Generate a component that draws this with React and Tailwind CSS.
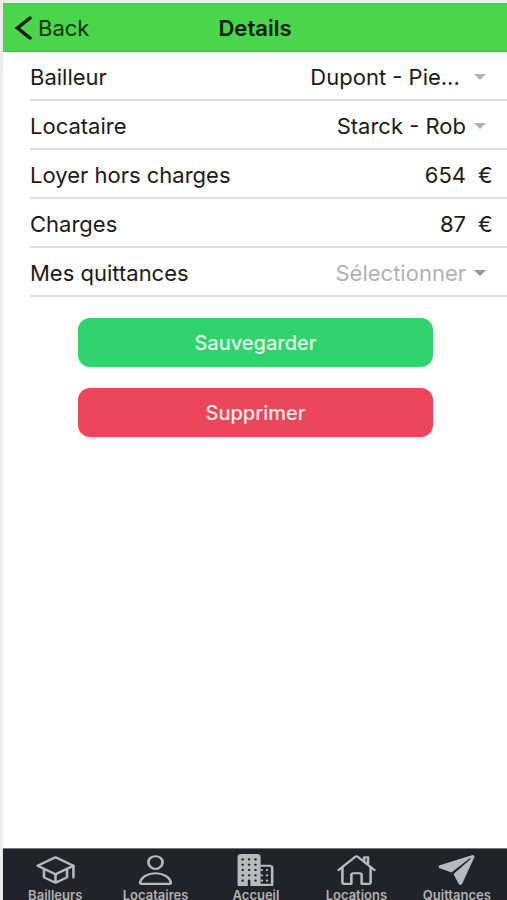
import { IoSchoolOutline, IoPersonOutline, IoBusiness, IoHomeOutline, IoPaperPlane } from 'react-icons/io5';

const tabs = [
  { label: 'Bailleurs', Icon: IoSchoolOutline },
  { label: 'Locataires', Icon: IoPersonOutline },
  { label: 'Accueil', Icon: IoBusiness },
  { label: 'Locations', Icon: IoHomeOutline },
  { label: 'Quittances', Icon: IoPaperPlane },
];

function Row({ id, label, children }) {
  return (
    <div className="flex h-[49px] items-center border-b-2 border-[#dedede] pt-0.5">
      <label htmlFor={id} className="flex-1 whitespace-nowrap">{label}</label>
      {children}
    </div>
  );
}

function SelectRow({ id, label, value, muted }) {
  return (
    <Row id={id} label={label}>
      <div className="relative">
        <select
          id={id}
          defaultValue={value}
          className={`w-56 appearance-none bg-transparent pr-[41px] text-right outline-none [text-align-last:right] ${muted ? 'text-[#b2b2b2]' : 'text-[#1a1a1a]'}`}
        >
          <option value={value}>{value}</option>
        </select>
        <svg viewBox="0 0 12 7" className={`pointer-events-none absolute top-1/2 right-[21px] h-[6px] w-3 -translate-y-1/2 ${muted ? 'text-[#979797]' : 'text-[#b0b0b0]'}`} preserveAspectRatio="none" aria-hidden="true">
          <path d="M0 0h12L6 7z" fill="currentColor" />
        </svg>
      </div>
    </Row>
  );
}

function AmountRow({ id, label, value }) {
  return (
    <Row id={id} label={label}>
      <input id={id} defaultValue={value} inputMode="numeric" className="w-24 bg-transparent text-right outline-none" />
      <span className="w-[41px] pl-3">€</span>
    </Row>
  );
}

export default function App() {
  return (
    <div className="flex h-screen flex-col overflow-hidden border-t-[3px] border-l-[3px] border-[#ededed] bg-white font-['Inter','Liberation_Sans',sans-serif] text-[22px] leading-7 text-[#1a1a1a]">
      <header className="grid h-[49px] shrink-0 grid-cols-3 items-center border-b border-[#43b843] bg-[#4bd54a] pt-0.5">
        <button type="button" className="flex items-center gap-1.5 pl-3 text-[#0b360c]">
          <svg viewBox="0 0 17 24" className="h-6 w-[17px] text-[#071c07]" fill="none" stroke="currentColor" strokeWidth="3.4" strokeLinecap="round" aria-hidden="true">
            <path d="M15 2 2.500 12 15 22" />
          </svg>
          Back
        </button>
        <h1 className="text-center font-semibold text-[#071c07]">Details</h1>
      </header>

      <main className="flex-1">
        <form className="flex flex-col">
          <div className="pl-[27px]">
            <SelectRow id="bailleur" label="Bailleur" value={'Dupont - Pie...\u00a0'} />
            <SelectRow id="locataire" label="Locataire" value="Starck - Rob" />
            <AmountRow id="loyer" label="Loyer hors charges" value="654" />
            <AmountRow id="charges" label="Charges" value="87" />
            <SelectRow id="quittances" label="Mes quittances" value="Sélectionner" muted />
          </div>
          <div className="flex flex-col gap-[21px] pt-[21px] pr-[74px] pl-[75px] text-[20px] font-medium">
            <button type="button" className="h-[49px] rounded-xl bg-[#30d36e] text-[#e4faec]">Sauvegarder</button>
            <button type="button" className="h-[49px] rounded-xl bg-[#ec465b] text-[#fde6e9]">Supprimer</button>
          </div>
        </form>
      </main>

      <nav className="h-[52px] shrink-0 border-t border-[#77787b] bg-[#222329] pl-0.5">
        <div className="grid grid-cols-5">
          {tabs.map(({ label, Icon }) => (
            <a key={label} href="#" className="flex flex-col items-center gap-0.5 pt-1 text-[13px] leading-3 font-semibold text-[#b0b1b4]">
              <Icon className="h-[34px] w-[41px] text-[#b9babd]" preserveAspectRatio="none" aria-hidden="true" />
              {label}
            </a>
          ))}
        </div>
      </nav>
    </div>
  );
}
